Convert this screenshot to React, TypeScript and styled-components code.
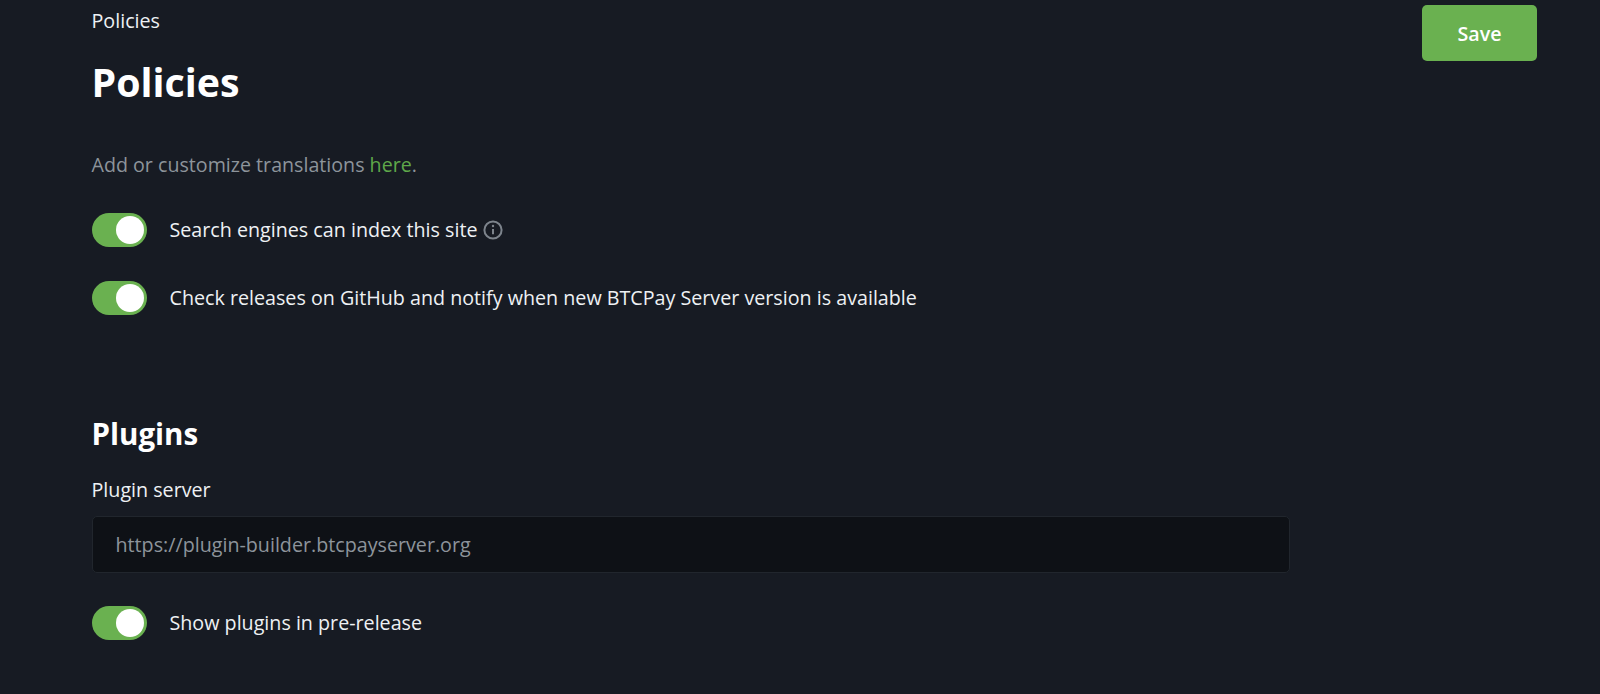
import styled, { createGlobalStyle } from 'styled-components';

const GlobalStyle = createGlobalStyle`
  html, body {
    margin: 0;
    padding: 0;
    height: 100%;
    background: #171b23;
  }
  body {
    font-family: "Open Sans", "Liberation Sans", sans-serif;
    font-size: 19.7px;
    color: #eef1f4;
    overflow: hidden;
  }
`;

const Page = styled.div`
  height: 694px;
  box-sizing: border-box;
  padding: 4px 63px 0 91.5px;
  display: flex;
  justify-content: space-between;
  align-items: flex-start;
`;

const Content = styled.main`
  width: 1198px;
  display: flex;
  flex-direction: column;
`;

const Breadcrumb = styled.div`
  line-height: 34px;
`;

const Title = styled.h1`
  margin: 20px 0 0;
  font-size: 39.3px;
  line-height: 48px;
  font-weight: 700;
  color: #fff;
`;

const Hint = styled.p`
  margin: 44px 0 0;
  font-size: 19.65px;
  line-height: 30px;
  color: #8d949b;
`;

const Link = styled.a`
  color: #5fa84a;
  text-decoration: none;
`;

const SwitchRow = styled.label<{ $gap?: number }>`
  display: flex;
  align-items: center;
  gap: 23px;
  height: 34px;
  margin-top: ${(p) => p.$gap ?? 34}px;
`;

const Switch = styled.span`
  position: relative;
  flex: none;
  width: 55px;
  height: 34px;
  border-radius: 17px;
  background: #6ab150;

  &::after {
    content: '';
    position: absolute;
    top: 3px;
    right: 3px;
    width: 28px;
    height: 28px;
    border-radius: 50%;
    background: #fff;
  }
`;

const SwitchText = styled.span`
  display: flex;
  align-items: center;
  gap: 6px;
  line-height: 30px;
`;

const InfoIcon = styled.svg`
  flex: none;
  width: 20px;
  height: 20px;
  color: #7d848c;
`;

const SectionTitle = styled.h2`
  margin: 101px 0 0;
  font-size: 29.5px;
  line-height: 36px;
  font-weight: 700;
  color: #fff;
`;

const FieldLabel = styled.label`
  display: block;
  margin-top: 23px;
  line-height: 30px;
`;

const Input = styled.input`
  display: block;
  width: 100%;
  height: 57px;
  box-sizing: border-box;
  margin-top: 11px;
  padding: 0 23px;
  background: #0e1116;
  border: 1px solid #21262d;
  border-radius: 5px;
  outline: none;
  font: inherit;
  color: #eef1f4;

  &::placeholder {
    color: #8d949b;
    opacity: 1;
  }
`;

const SaveButton = styled.button`
  flex: none;
  width: 115px;
  height: 56px;
  margin-top: 1px;
  border: none;
  border-radius: 5px;
  background: #6ab150;
  color: #fff;
  font-family: inherit;
  font-size: 19.7px;
  font-weight: 600;
  cursor: pointer;
`;

export default function App() {
  return (
    <>
      <GlobalStyle />
      <Page>
        <Content>
          <Breadcrumb>Policies</Breadcrumb>
          <Title>Policies</Title>
          <Hint>
            Add or customize translations <Link href="#">here</Link>.
          </Hint>
          <SwitchRow $gap={33}>
            <Switch />
            <SwitchText>
              Search engines can index this site
              <InfoIcon viewBox="0 0 20 20" fill="none" stroke="currentColor">
                <circle cx="10" cy="10" r="8.6" strokeWidth="2" />
                <path d="M10 9v5.2" strokeWidth="2" />
                <circle cx="10" cy="6" r="1.2" fill="currentColor" stroke="none" />
              </InfoIcon>
            </SwitchText>
          </SwitchRow>
          <SwitchRow>
            <Switch />
            <SwitchText>Check releases on GitHub and notify when new BTCPay Server version is available</SwitchText>
          </SwitchRow>
          <SectionTitle>Plugins</SectionTitle>
          <FieldLabel htmlFor="plugin-server">Plugin server</FieldLabel>
          <Input id="plugin-server" placeholder="https://plugin-builder.btcpayserver.org" />
          <SwitchRow $gap={33}>
            <Switch />
            <SwitchText>Show plugins in pre-release</SwitchText>
          </SwitchRow>
        </Content>
        <SaveButton>Save</SaveButton>
      </Page>
    </>
  );
}
